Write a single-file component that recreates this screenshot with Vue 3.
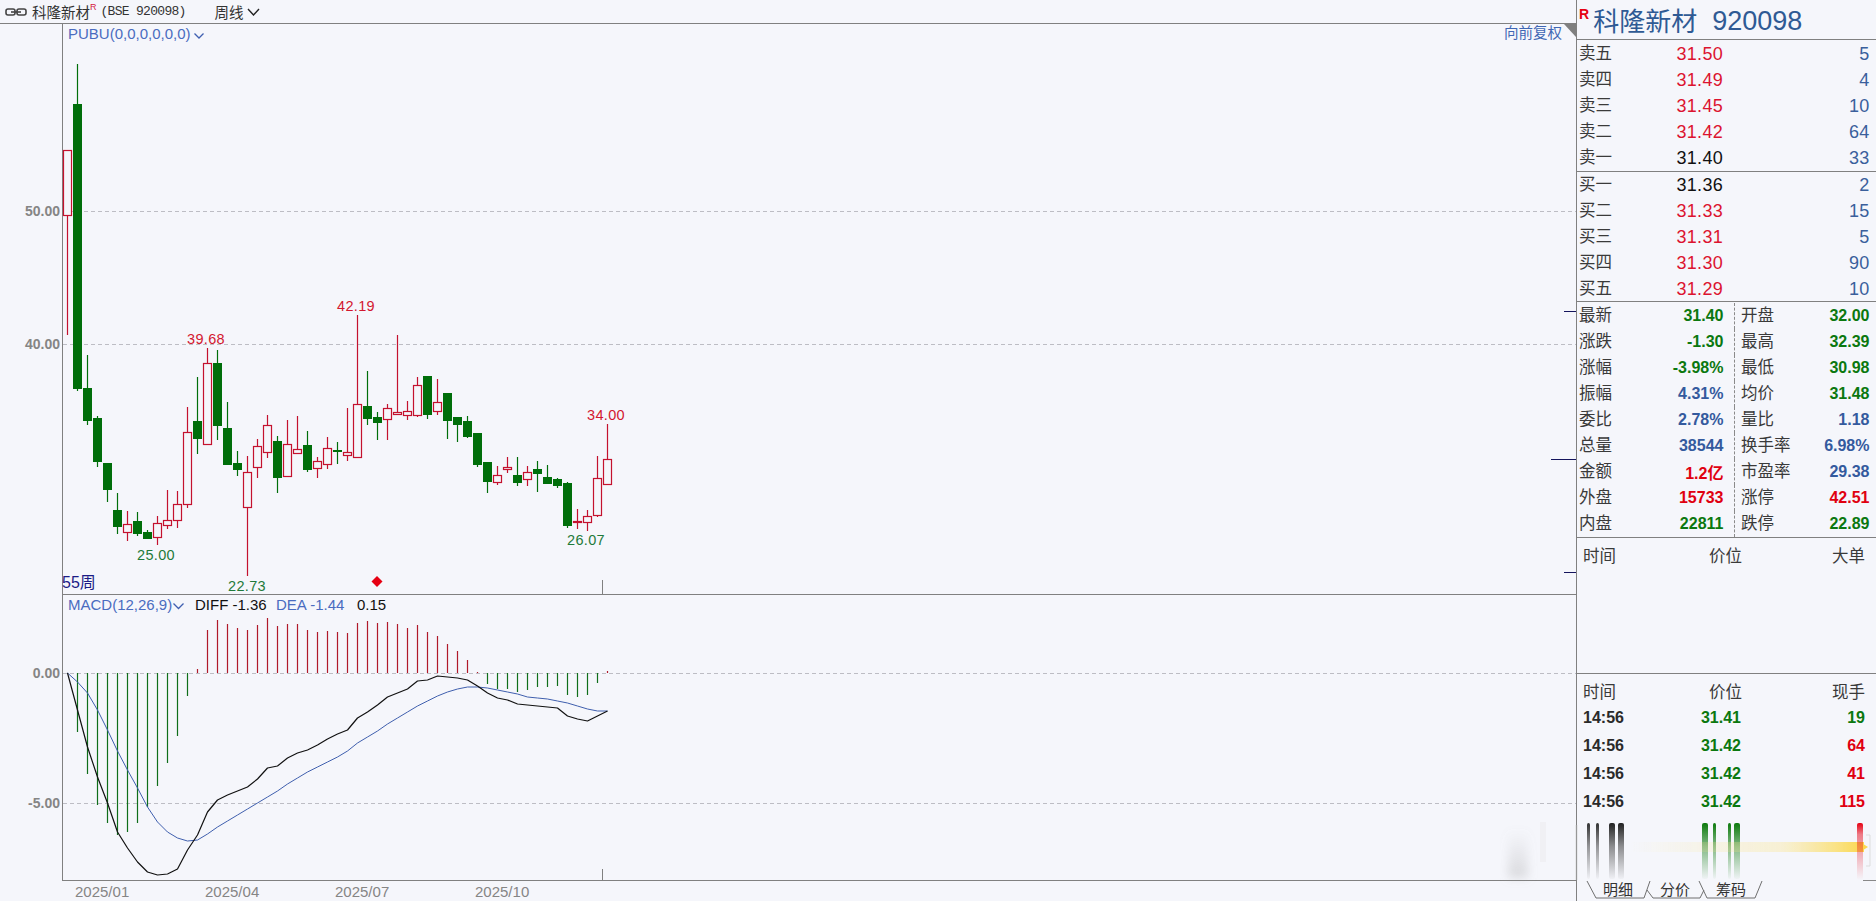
<script setup>
const c = [
  ['r',150,150,215,335],['g',64,104,389,391],['g',355,388,421,425],['g',416,418,462,467],['g',463,463,490,502],
  ['g',493,510,527,534],['r',511,524,532,541],['g',512,521,534,536],['g',530,532,539,539],['r',516,523,537,545],
  ['r',490,520,525,529],['r',491,504,520,528],['r',407,432,504,508],['g',377,421,439,454],['r',348,363,444,445],
  ['g',350,363,426,440],['g',402,428,465,465],['g',451,463,470,476],['r',456,472,507,576],['r',439,446,467,478],
  ['r',415,425,452,458],['g',436,441,478,493],['r',420,444,476,476],['r',416,449,453,453],['g',431,445,470,472],
  ['r',457,461,468,478],['r',437,448,464,469],['g',442,450,452,464],['r',408,452,455,461],['r',315,404,457,457],
  ['g',371,406,419,425],['g',412,417,423,440],['r',404,408,419,440],['r',335,412,414,414],['r',401,411,415,420],
  ['r',377,385,415,417],['g',376,376,415,419],['r',379,402,411,415],['g',393,393,421,439],['g',417,417,425,442],
  ['g',416,421,437,438],['g',433,433,465,467],['g',462,462,482,493],['r',466,475,482,485],['r',457,467,469,473],
  ['g',457,475,483,486],['r',466,472,479,486],['g',461,469,474,492],['g',465,477,484,484],['g',478,479,486,488],
  ['g',482,483,526,528],['r',509,521,522,529],['r',510,516,522,531],['r',456,478,515,517],['r',424,459,484,484]
]
const candles = c.map((d, i) => {
  const [k, top, o, b, bottom] = d
  const x = 67.5 + i * 10
  return { k, x, top, o, b, bottom }
})
const hist = [673,732,774,805,823,835,832,823,807,786,763,736,696,669,630,620,624,628,630,625,618,626,624,624,630,632,631,632,633,623,621,623,622,624,628,625,632,636,644,651,660,672,684,689,689,692,690,687,687,686,695,697,695,683,671]
const bars = hist.map((y, i) => ({ x: 67.5 + i * 10, y, up: y < 673 })).filter((b, i) => i > 0)
const diff = [673,710,747,777,803,832,848,862,872,875,874,869,850,835,812,800,795,791,787,779,768,766,758,753,750,745,739,734,730,718,712,705,697,693,689,681,680,676,677,678,680,686,693,698,700,704,705,706,707,708,716,719,721,716,711]
const dea = [673,682,693,710,730,751,770,788,807,822,832,838,841,840,834,827,821,815,809,803,797,791,784,778,772,767,762,757,751,743,737,731,724,718,712,706,701,696,692,689,687,687,688,690,692,694,697,698,699,701,703,706,709,711,711]
const pts = a => a.map((y, i) => `${67.5 + i * 10},${y}`).join(' ')
const peaks = [
  { t: '39.68', x: 206, y: 344, k: 'r' }, { t: '42.19', x: 356, y: 311, k: 'r' }, { t: '34.00', x: 606, y: 420, k: 'r' },
  { t: '25.00', x: 156, y: 560, k: 'g' }, { t: '22.73', x: 247, y: 591, k: 'g' }, { t: '26.07', x: 586, y: 545, k: 'g' }
]
const dates = [{ t: '2025/01', x: 75 }, { t: '2025/04', x: 205 }, { t: '2025/07', x: 335 }, { t: '2025/10', x: 475 }]
const sells = [['卖五','31.50','5','r'],['卖四','31.49','4','r'],['卖三','31.45','10','r'],['卖二','31.42','64','r'],['卖一','31.40','33','k']]
const buys = [['买一','31.36','2','k'],['买二','31.33','15','r'],['买三','31.31','5','r'],['买四','31.30','90','r'],['买五','31.29','10','r']]
const stats = [
  ['最新','31.40','g','开盘','32.00','g'],['涨跌','-1.30','g','最高','32.39','g'],['涨幅','-3.98%','g','最低','30.98','g'],
  ['振幅','4.31%','b','均价','31.48','g'],['委比','2.78%','b','量比','1.18','b'],['总量','38544','b','换手率','6.98%','b'],
  ['金额','1.2亿','r','市盈率','29.38','b'],['外盘','15733','r','涨停','42.51','r'],['内盘','22811','g','跌停','22.89','g']
]
const ticks = [['14:56','31.41','19','g'],['14:56','31.42','64','r'],['14:56','31.42','41','r'],['14:56','31.42','115','r']]
const fade = [
  { x: 1587, w: 3, c: '#333' }, { x: 1596, w: 3, c: '#333' }, { x: 1609, w: 6, c: '#222' }, { x: 1618, w: 6, c: '#222' },
  { x: 1702, w: 6, c: '#0a7a0a' }, { x: 1713, w: 3, c: '#0a7a0a' }, { x: 1728, w: 3, c: '#0a7a0a' }, { x: 1734, w: 6, c: '#0a7a0a' }
]
</script>

<template>
  <div class="page">
    <div class="left">
      <header class="top">
        <svg class="link" width="22" height="8" viewBox="0 0 22 8">
          <rect x="1" y="1" width="9" height="6" rx="2" />
          <rect x="12" y="1" width="9" height="6" rx="2" />
          <path d="M6 4h10" />
        </svg>
        <span class="name">科隆新材</span><sup class="sup">R</sup>
        <span class="code">(BSE  920098)</span>
        <span class="period">周线</span>
        <svg class="chev" width="13" height="8" viewBox="0 0 13 8"><path d="M1 1l5.5 6L12 1" /></svg>
      </header>
      <svg class="chart" width="1576" height="877" viewBox="0 24 1576 877">
        <g class="dash">
          <line x1="63" x2="1576" y1="211.5" y2="211.5" />
          <line x1="63" x2="1576" y1="344.5" y2="344.5" />
          <line x1="63" x2="1576" y1="673.5" y2="673.5" />
          <line x1="63" x2="1576" y1="803.5" y2="803.5" />
        </g>
        <g class="frame">
          <line x1="62.5" x2="62.5" y1="24" y2="880" />
          <line x1="62" x2="1576" y1="594.5" y2="594.5" />
          <line x1="62" x2="1576" y1="880.5" y2="880.5" />
          <line x1="602.5" x2="602.5" y1="580" y2="594" />
          <line x1="602.5" x2="602.5" y1="869" y2="880" />
        </g>
        <g class="navy">
          <line x1="1564" x2="1576" y1="311.5" y2="311.5" />
          <line x1="1551" x2="1576" y1="459.5" y2="459.5" />
          <line x1="1564" x2="1576" y1="572.5" y2="572.5" />
        </g>
        <text class="legend" x="68" y="39">PUBU(0,0,0,0,0,0)</text>
        <path class="bluechev" d="M194.5 33.5l4.5 4.5 4.5-4.5" />
        <text class="legend small" x="1504" y="38">向前复权</text>
        <path d="M1564 24h12v13z" fill="#7f7f7f" />
        <text class="axis" x="60" y="216" text-anchor="end">50.00</text>
        <text class="axis" x="60" y="349" text-anchor="end">40.00</text>
        <text class="axis" x="60" y="678" text-anchor="end">0.00</text>
        <text class="axis" x="60" y="808" text-anchor="end">-5.00</text>
        <text class="weeks" x="62" y="588">55周</text>

        <g v-for="d in candles" :key="d.x" :class="d.k === 'r' ? 'up' : 'down'">
          <line :x1="d.x" :x2="d.x" :y1="d.top" :y2="d.bottom" />
          <rect v-if="d.k === 'r'" :x="d.x - 4" :y="d.o + 0.5" width="8" :height="Math.max(d.b - d.o, 1)" />
          <rect v-else :x="d.x - 4.5" :y="d.o" width="9" :height="Math.max(d.b - d.o, 2)" />
        </g>

        <text v-for="p in peaks" :key="p.t" class="peak" :class="p.k" :x="p.x" :y="p.y" text-anchor="middle">{{ p.t }}</text>
        <path d="M377 576l5.5 5.5-5.5 5.5-5.5-5.5z" fill="#e60012" />

        <text class="legend" x="68" y="610">MACD(12,26,9)</text>
        <path class="bluechev" d="M173.5 603.5l5 5 5-5" />
        <text class="val" x="195" y="610">DIFF -1.36</text>
        <text class="legend" x="276" y="610">DEA -1.44</text>
        <text class="val" x="357" y="610">0.15</text>

        <line v-for="b in bars" :key="b.x" :x1="b.x" :x2="b.x" :y1="673" :y2="b.y" :class="b.up ? 'hup' : 'hdown'" />
        <polyline :points="pts(dea)" class="dea" />
        <polyline :points="pts(diff)" class="diff" />

        <text v-for="d in dates" :key="d.t" class="date" :x="d.x" y="897">{{ d.t }}</text>
      </svg>
    </div>

    <aside class="panel">
      <div class="title"><b class="flag">R</b><span>科隆新材</span><span class="titlecode">920098</span></div>

      <section class="book sell">
        <div v-for="r in sells" :key="r[0]" class="row">
          <span class="lab">{{ r[0] }}</span>
          <span class="price" :class="r[3]">{{ r[1] }}</span>
          <span class="qty">{{ r[2] }}</span>
        </div>
      </section>

      <section class="book buy">
        <div v-for="r in buys" :key="r[0]" class="row">
          <span class="lab">{{ r[0] }}</span>
          <span class="price" :class="r[3]">{{ r[1] }}</span>
          <span class="qty">{{ r[2] }}</span>
        </div>
      </section>

      <section class="stats">
        <div v-for="r in stats" :key="r[0]" class="srow">
          <div class="cell first">
            <span class="lab">{{ r[0] }}</span><b :class="r[2]">{{ r[1] }}</b>
          </div>
          <div class="cell second">
            <span class="lab">{{ r[3] }}</span><b :class="r[5]">{{ r[4] }}</b>
          </div>
        </div>
      </section>

      <section class="big">
        <div class="thead"><span>时间</span><span>价位</span><span>大单</span></div>
      </section>

      <section class="tickpane">
        <div class="thead"><span>时间</span><span>价位</span><span>现手</span></div>
        <div v-for="(t, i) in ticks" :key="i" class="tick">
          <b class="tm">{{ t[0] }}</b><b class="g">{{ t[1] }}</b><b :class="t[3]">{{ t[2] }}</b>
        </div>
      </section>
    </aside>

    <svg class="overlay" width="376" height="81" viewBox="1500 820 376 81">
      <defs>
        <linearGradient id="fd" x1="0" x2="0" y1="0" y2="1">
          <stop offset="0" stop-color="#f5f6fb" stop-opacity="0" />
          <stop offset=".4" stop-color="#f5f6fb" stop-opacity=".5" />
          <stop offset=".9" stop-color="#f5f6fb" stop-opacity=".92" />
          <stop offset="1" stop-color="#f5f6fb" stop-opacity="1" />
        </linearGradient>
        <linearGradient id="ye" x1="0" x2="1" y1="0" y2="0">
          <stop offset="0" stop-color="#fbe58a" stop-opacity="0" />
          <stop offset="0.65" stop-color="#fbe58a" stop-opacity=".35" />
          <stop offset="1" stop-color="#fbd84e" stop-opacity="1" />
        </linearGradient>
        <linearGradient id="rd" x1="0" x2="0" y1="0" y2="1">
          <stop offset="0" stop-color="#e60012" />
          <stop offset=".2" stop-color="#e60012" stop-opacity=".5" />
          <stop offset="1" stop-color="#e60012" stop-opacity="0" />
        </linearGradient>
        <linearGradient id="gy" x1="0" x2="0" y1="0" y2="1">
          <stop offset="0" stop-color="#999" stop-opacity="0" />
          <stop offset="1" stop-color="#999" stop-opacity=".3" />
        </linearGradient>
        <filter id="bl" x="-60%" y="-30%" width="220%" height="160%"><feGaussianBlur stdDeviation="5" /></filter>
        <filter id="bs" x="-50%" y="-10%" width="200%" height="120%"><feGaussianBlur stdDeviation="0.7" /></filter>
      </defs>
      <rect x="1508" y="830" width="20" height="48" fill="url(#gy)" filter="url(#bl)" />
      <rect x="1540" y="822" width="6" height="40" fill="#ddd" opacity=".2" filter="url(#bs)" />
      <rect x="1575" y="825" width="3" height="55" fill="#ccc" opacity=".3" filter="url(#bs)" />
      <rect v-for="b in fade" :key="b.x" :x="b.x" y="823" :width="b.w" height="56" rx="2" :fill="b.c" filter="url(#bs)" />
      <rect x="1580" y="823" width="170" height="58" fill="url(#fd)" />
      <rect x="1630" y="842" width="234" height="10" fill="url(#ye)" filter="url(#bs)" />
      <path d="M1860 842l8 5-8 5z" fill="#fbd84e" />
      <rect x="1857" y="823" width="6" height="57" rx="2" fill="url(#rd)" />
      <path d="M1866 835h4v31h-4" fill="none" stroke="#ddd" />
      <line x1="1863" x2="1876" y1="880.5" y2="880.5" stroke="#888" />
      <g class="tabs">
        <path d="M1587 881l9 17h48l6-17" />
        <path d="M1647 890l6 8h47l4-8" />
        <path d="M1699 881l8 17h48l7-17" />
      </g>
      <text class="tabt" x="1603" y="895">明细</text>
      <text class="tabt" x="1660" y="895">分价</text>
      <text class="tabt" x="1716" y="895">筹码</text>
    </svg>
  </div>
</template>

<style>
html, body { margin: 0; background: #f5f6fb; }
</style>

<style scoped>
.page {
  position: relative;
  display: flex;
  width: 1876px;
  height: 901px;
  overflow: hidden;
  background: #f5f6fb;
  font-family: "Liberation Sans", "Noto Sans CJK SC", sans-serif;
  color: #333;
}
.left { width: 1576px; flex: none; }
.top {
  display: flex;
  align-items: center;
  height: 23px;
  border-bottom: 1px solid #808080;
  padding-left: 5px;
  font-size: 14.5px;
}
.link { margin-right: 5px; }
.link rect, .link path { fill: none; stroke: #444; stroke-width: 1.6; }
.sup { color: #d4213d; font-size: 9px; margin: -8px 0 0 0; line-height: 1; }
.code { font-family: "Liberation Mono", monospace; font-size: 13px; letter-spacing: -0.7px; white-space: pre; margin-left: 4px; width: 114px; }
.chev { margin-left: 3px; }
.chev path { fill: none; stroke: #222; stroke-width: 1.4; }
.chart { display: block; font-family: "Liberation Sans", "Noto Sans CJK SC", sans-serif; }
.dash line { stroke: #bdbdc4; stroke-dasharray: 4 3; }
.frame line { stroke: #808080; }
.navy line { stroke: #14145c; }
.legend { fill: #4a6cc0; font-size: 15px; }
.legend.small { fill: #3f66b4; font-size: 14.5px; }
.bluechev { fill: none; stroke: #3f5fb0; stroke-width: 1.3; }
.axis { fill: #858585; font-size: 14px; font-weight: 700; }
.weeks { fill: #1c1c86; font-size: 16px; }
.up line, .up rect { stroke: #c4122e; stroke-width: 1.2; }
.up rect { fill: #f5f6fb; }
.down line { stroke: #006e0a; stroke-width: 1.2; }
.down rect { fill: #006e0a; }
.peak { font-size: 14.5px; letter-spacing: 0.3px; }
.peak.r { fill: #d3172f; }
.peak.g { fill: #1f7a3a; }
.val { fill: #111; font-size: 15px; }
.hup { stroke: #b01a2a; stroke-width: 1.2; }
.hdown { stroke: #0f6e1a; stroke-width: 1.2; }
.dea { fill: none; stroke: #3f5fae; stroke-width: 1; stroke-linejoin: round; }
.diff { fill: none; stroke: #111; stroke-width: 1.2; stroke-linejoin: round; }
.date { fill: #858585; font-size: 15px; }

.panel {
  flex: none;
  width: 299px;
  border-left: 1px solid #808080;
  display: flex;
  flex-direction: column;
}
.title {
  display: flex;
  align-items: center;
  height: 40px;
  box-sizing: border-box;
  padding: 4px 0 0 2px;
  border-bottom: 1px solid #808080;
  color: #2f5a94;
  font-size: 26px;
  line-height: 1;
}
.flag { color: #e60012; font-size: 14px; align-self: flex-start; margin: 3px 4px 0 0; }
.titlecode { margin-left: 15px; font-size: 27px; }
.book { border-bottom: 1px solid #808080; height: 130px; }
.sell { padding-top: 1px; }
.buy { height: 129px; }
.row { display: flex; height: 26px; align-items: center; padding: 0 6.5px 0 2px; }
.lab { font-size: 16.5px; line-height: 20px; padding-bottom: 3px; color: #3a3a3a; }
.row .lab { width: 95px; }
.price { width: 49px; font-size: 18px; letter-spacing: 0.3px; flex: none; text-align: right; }
.qty { flex: 1; text-align: right; font-size: 18px; letter-spacing: 0.3px; color: #3a5f9c; }
.r { color: #dc1430; }
.k { color: #111; }
.g { color: #0b780f; }
.b { color: #345a9e; }
.stats { border-bottom: 1px solid #808080; height: 236px; padding-top: 1px; box-sizing: border-box; }
.srow { display: flex; height: 26px; }
.cell { display: flex; align-items: center; justify-content: space-between; font-size: 16px; }
.first { width: 145px; padding: 0 10.5px 0 2px; border-right: 1px dashed #8a8a8a; }
.second { width: 129px; padding: 0 6.5px 0 6px; }
.stats b.r { color: #e00010; }
.big { height: 135px; border-bottom: 1px solid #808080; }
.thead { display: grid; grid-template-columns: 107px 52px 1fr; font-size: 16.5px; padding: 0 11px 0 6px; height: 34px; align-items: center; color: #3a3a3a; }
.thead span:nth-child(2) { text-align: right; white-space: nowrap; }
.thead span:nth-child(3) { text-align: right; }
.tickpane .thead { height: 30px; padding-top: 3px; box-sizing: border-box; }
.tick { display: grid; grid-template-columns: 107px 51px 1fr; height: 28px; align-items: center; font-size: 16px; padding: 0 11px 0 6px; }
.tick .tm { color: #2a2a2a; }
.tick b:nth-child(2) { text-align: right; }
.tick b:nth-child(3) { text-align: right; }
.tick b.r { color: #e00010; }
.overlay { position: absolute; left: 1500px; top: 820px; pointer-events: none; font-family: "Liberation Sans", "Noto Sans CJK SC", sans-serif; }
.tabs path { fill: none; stroke: #6f6f6f; }
.tabt { font-size: 15px; fill: #333; }
</style>
